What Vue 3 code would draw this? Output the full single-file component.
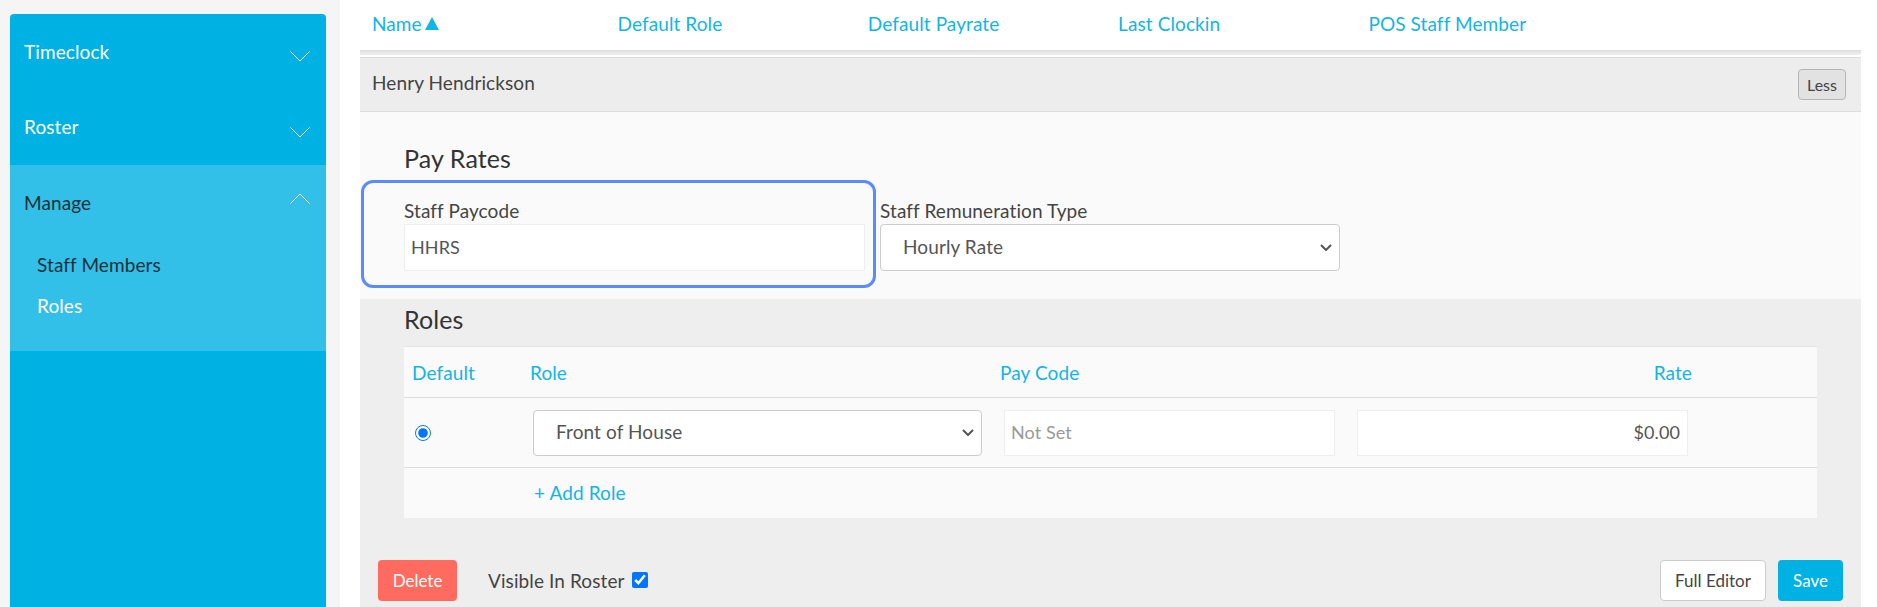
<template>
  <div class="page">
    <aside class="side">
      <nav class="menu">
        <div class="menu-row">
          <span>Timeclock</span>
          <svg class="chev" viewBox="0 0 20 11"><path d="M0.5 0.5 L10 10 L19.5 0.5" /></svg>
        </div>
        <div class="menu-row">
          <span>Roster</span>
          <svg class="chev" viewBox="0 0 20 11"><path d="M0.5 0.5 L10 10 L19.5 0.5" /></svg>
        </div>
        <div class="menu-open">
          <div class="menu-row menu-row--open">
            <span>Manage</span>
            <svg class="chev" viewBox="0 0 20 11"><path d="M0.5 10.5 L10 1 L19.5 10.5" /></svg>
          </div>
          <a class="sub sub--dark">Staff Members</a>
          <a class="sub">Roles</a>
        </div>
      </nav>
    </aside>

    <main class="main">
      <div class="cols">
        <a class="col-head col-head--sorted">
          Name
          <svg class="sort" viewBox="0 0 14 13"><polygon points="7,0 14,13 0,13" /></svg>
        </a>
        <a v-for="c in columns" :key="c" class="col-head">{{ c }}</a>
      </div>
      <div class="shadow"></div>

      <div class="person">
        <span>Henry Hendrickson</span>
        <button class="btn-less">Less</button>
      </div>

      <section class="rates">
        <h3>Pay Rates</h3>
        <div class="fields">
          <label class="field field--code">
            <span>Staff Paycode</span>
            <input class="txt" value="HHRS" />
          </label>
          <label class="field field--type">
            <span>Staff Remuneration Type</span>
            <select class="sel"><option>Hourly Rate</option></select>
          </label>
        </div>
        <div class="highlight"></div>
      </section>

      <section class="roles">
        <h3>Roles</h3>
        <div class="table">
          <div class="tr tr--head">
            <a class="h-default">Default</a>
            <a class="h-role">Role</a>
            <a class="h-code">Pay Code</a>
            <a class="h-rate">Rate</a>
          </div>
          <div class="tr tr--body">
            <div class="c-radio"><input type="radio" name="def" checked /></div>
            <div class="c-role"><select class="sel"><option>Front of House</option></select></div>
            <div class="c-input"><input class="txt" placeholder="Not Set" /></div>
            <div class="c-input"><input class="txt txt--right" value="$0.00" /></div>
          </div>
          <div class="tr tr--add">
            <span></span>
            <a class="add">+ Add Role</a>
          </div>
        </div>

        <div class="actions">
          <button class="btn btn--delete">Delete</button>
          <label class="visible">
            <span>Visible In Roster</span>
            <input type="checkbox" checked />
          </label>
          <button class="btn btn--plain">Full Editor</button>
          <button class="btn btn--save">Save</button>
        </div>
      </section>
    </main>
  </div>
</template>

<script setup>
const columns = ['Default Role', 'Default Payrate', 'Last Clockin', 'POS Staff Member']
</script>

<style>
html, body {
  margin: 0;
  background: #fff;
}
</style>

<style scoped>
.page {
  display: flex;
  height: 607px;
  overflow: hidden;
  font-family: Lato, "Noto Sans", sans-serif;
  font-size: 19px;
  color: #444;
  letter-spacing: 0.1px;
}

.side {
  width: 340px;
  flex: none;
  box-sizing: border-box;
  padding: 14px 14px 0 10px;
  background: #f5f5f5;
}
.menu {
  height: 100%;
  background: #00b2e3;
  border-radius: 4px 4px 0 0;
  color: #fff;
}
.menu-row {
  height: 75.5px;
  box-sizing: border-box;
  padding: 25px 16px 0 14px;
  display: flex;
  justify-content: space-between;
  align-items: flex-start;
  line-height: 24px;
}
.menu-row:first-child span {
  margin-top: 1px;
}
.chev {
  width: 20px;
  height: 11px;
  margin-top: 12px;
  fill: none;
  stroke: #fff;
  stroke-width: 1;
}
.menu-open {
  height: 186px;
  background: #33c0e8;
}
.menu-row--open {
  height: 88px;
  color: #16303a;
}
.menu-row--open span {
  margin-top: 0;
}
.menu-row--open .chev {
  margin-top: 3px;
}
.sub {
  display: block;
  padding-left: 27px;
  line-height: 24px;
  height: 41px;
}
.sub--dark {
  color: #16303a;
}

.main {
  flex: none;
  width: 1501px;
  margin-left: 20px;
}
.cols {
  display: grid;
  grid-template-columns: 245.5px repeat(4, 250.3px);
  height: 50px;
  box-sizing: border-box;
  padding: 0 0 3px 12px;
  align-items: center;
}
.col-head,
.tr--head a,
.add {
  color: #12b5e5;
}
.col-head--sorted {
  display: flex;
  align-items: center;
  gap: 3px;
}
.sort {
  width: 14px;
  height: 13px;
  fill: #12b5e5;
}
.shadow {
  height: 5px;
  margin-bottom: 2px;
  background: linear-gradient(#dcdcdc, #f1f1f1);
}
.person {
  height: 55px;
  box-sizing: border-box;
  padding: 0 15px 4px 12px;
  display: flex;
  justify-content: space-between;
  align-items: center;
  background: #ededed;
  border-top: 1px solid #ddd;
  border-bottom: 1px solid #ddd;
}
.btn-less {
  width: 48px;
  height: 31px;
  padding: 0;
  margin-top: 4px;
  font: inherit;
  font-size: 16px;
  color: #444;
  background: #e2e2e2;
  border: 1px solid #b5b5b5;
  border-radius: 4px;
}

.rates {
  position: relative;
  height: 187px;
  box-sizing: border-box;
  padding: 30px 0 0 44px;
  background: #fafafa;
}
h3 {
  margin: 0;
  font-size: 25px;
  font-weight: 400;
  line-height: 32px;
  color: #333;
}
.fields {
  display: flex;
  gap: 15px;
  margin-top: 25px;
}
.field {
  display: flex;
  flex-direction: column;
  gap: 1px;
}
.field span {
  line-height: 24px;
}
.field--code {
  width: 461px;
}
.field--type {
  width: 460px;
}
.txt,
.sel {
  width: 100%;
  height: 47px;
  box-sizing: border-box;
  font: inherit;
  letter-spacing: inherit;
  color: #555;
  background-color: #fff;
}
.txt {
  padding: 0 7px 2px 6px;
  border: 1px solid #eee;
  outline: none;
  font-size: 18px;
}
.txt::placeholder {
  color: #999;
  opacity: 1;
}
.txt--right {
  text-align: right;
}
.sel {
  padding: 0 22px 2px;
  border: 1px solid #ccc;
  border-radius: 4px;
  appearance: none;
  background-image: url("data:image/svg+xml,%3Csvg xmlns='http://www.w3.org/2000/svg' viewBox='0 0 12 7'%3E%3Cpath d='M1 1l5 5 5-5' fill='none' stroke='%23555' stroke-width='2'/%3E%3C/svg%3E");
  background-repeat: no-repeat;
  background-position: right 7px center;
  background-size: 12px 7px;
}
.highlight {
  position: absolute;
  left: 1px;
  top: 68px;
  width: 515px;
  height: 108px;
  box-sizing: border-box;
  border: 3px solid #5b8cff;
  border-radius: 12px;
  pointer-events: none;
}

.roles {
  height: 308px;
  box-sizing: border-box;
  padding: 4px 44px 0 44px;
  background: #eee;
}
.table {
  margin-top: 11px;
  background: #fafafa;
  border-top: 1px solid #e3e3e3;
}
.tr {
  display: grid;
  grid-template-columns: 120px 472px 353px 343px 1fr;
  align-items: center;
}
.tr--head {
  height: 50px;
  border-bottom: 1px solid #ddd;
}
.tr--body {
  height: 69px;
  border-bottom: 1px solid #ddd;
}
.tr--add {
  height: 50px;
}
.h-default {
  padding-left: 8px;
}
.h-role {
  padding-left: 6px;
}
.h-code {
  padding-left: 4px;
}
.h-rate {
  text-align: right;
}
.c-radio {
  padding-left: 11px;
  display: flex;
  align-items: center;
}
.c-radio input {
  width: 16px;
  height: 16px;
  margin: 0;
}
.c-role {
  padding-left: 9px;
  padding-right: 14px;
}
.c-input {
  padding-left: 8px;
}
.c-input .txt {
  width: 331px;
  height: 46px;
}
.c-role .sel {
  height: 46px;
}
.add {
  padding: 0 0 2px 10px;
}
.actions {
  display: flex;
  align-items: center;
  margin: 42px -26px 0 -26px;
}
.btn {
  height: 41px;
  box-sizing: border-box;
  padding: 0;
  font: inherit;
  font-size: 17px;
  border-radius: 4px;
  border: 1px solid transparent;
}
.btn--delete {
  width: 79px;
  background: #ff6b5e;
  color: #fff;
}
.visible {
  margin-left: 31px;
  margin-right: auto;
  display: flex;
  align-items: center;
  gap: 7px;
}
.visible input {
  width: 16px;
  height: 16px;
  margin: -2px 0 0;
}
.btn--plain {
  width: 106px;
  margin-right: 12px;
  background: #fff;
  border-color: #ccc;
  color: #444;
}
.btn--save {
  width: 65px;
  background: #00b2e3;
  color: #fff;
}
</style>
